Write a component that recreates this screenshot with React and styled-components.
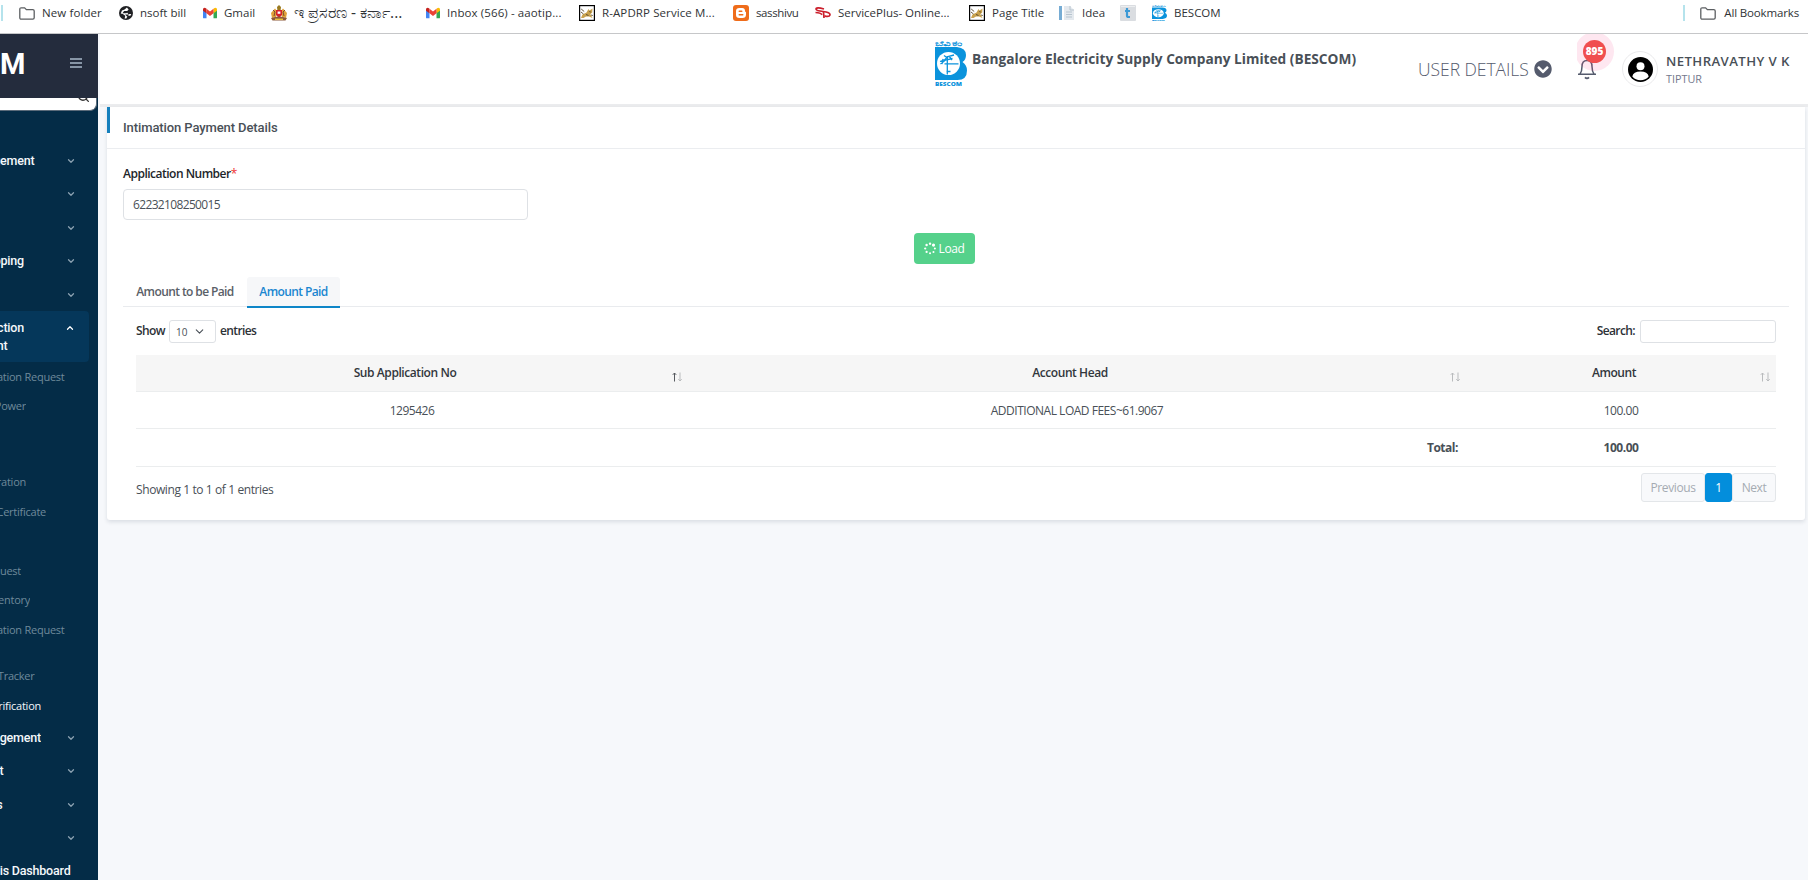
import styled, { createGlobalStyle } from "styled-components";
import { FiChevronDown, FiChevronUp, FiSearch } from "react-icons/fi";
import { FaChevronCircleDown } from "react-icons/fa";

const bookmarks = [
  { icon: "folder", title: "New folder", width: 100, spacing: 0.1 },
  { icon: "globe", title: "nsoft bill", width: 84 },
  { icon: "gmail", title: "Gmail", width: 68 },
  { icon: "emblem", title: "ಇ ಪ್ರಸರಣ - ಕರ್ನಾ...", width: 155, size: 15.5 },
  { icon: "gmail", title: "Inbox (566) - aaotip...", width: 153, spacing: 0.1 },
  { icon: "cat", title: "R-APDRP Service M...", width: 154, spacing: 0.1 },
  { icon: "blogger", title: "sasshivu", width: 82, spacing: -0.4 },
  { icon: "serviceplus", title: "ServicePlus- Online...", width: 154 },
  { icon: "cat", title: "Page Title", width: 90, spacing: 0.05 },
  { icon: "idea", title: "Idea", width: 61 },
  { icon: "t", title: "", width: 32 },
  { icon: "bescom", title: "BESCOM", width: 80 },
];

const menu = [
  { label: "gement", end: 34.5, height: 33, chevron: true },
  { label: "", end: 0, height: 34, chevron: true },
  { label: "", end: 0, height: 33, chevron: true },
  { label: "pping", end: 24, height: 34, chevron: true },
  { label: "", end: 0, height: 33, chevron: true },
  { active: true },
  { label: "ation Request", end: 64.5, height: 29, sub: true },
  { label: "Power", end: 26, height: 30, sub: true },
  { label: "ration", end: 26, height: 30, gap: 46, sub: true },
  { label: "Certificate", end: 46, height: 30, sub: true },
  { label: "uest", end: 21, height: 29, gap: 29, sub: true },
  { label: "entory", end: 30, height: 30, sub: true },
  { label: "ation Request", end: 64.5, height: 29, sub: true },
  { label: "Tracker", end: 34.5, height: 30, gap: 17, sub: true },
  { label: "rification", end: 41, height: 30, sub: true, current: true },
  { label: "agement", end: 41, height: 33, chevron: true },
  { label: "t", end: 3.5, height: 34, chevron: true },
  { label: "s", end: 2.5, height: 33, chevron: true },
  { label: "", end: 0, height: 33, chevron: true },
  { label: "is Dashboard", end: 70.5, height: 34 },
];

const BescomLogo = ({ width, height }) => (
  <svg width={width} height={height} viewBox="0 0 32 46" preserveAspectRatio="none">
    <text x="0" y="5.8" fontSize="7" fontWeight="700" fill="#0b93dc" textLength="27" lengthAdjust="spacingAndGlyphs">
      ಬೆವಿಕಂ
    </text>
    <path d="M0 7h22q9 1 9 8 0 5-3.500 7 4.500 3 4.500 8.500 0 9.500-9.500 9.500H0z" fill="#0b93dc" />
    <circle cx="13.500" cy="23.500" r="11.500" fill="#fff" />
    <path d="M12.300 16v18.500M9.500 23.800h14M11.500 31.500h4" stroke="#0b93dc" strokeWidth="1.300" fill="none" />
    <path
      d="M5 21.500l5-2 3-3 6-1.500M5.500 24l5-4 7-1.500M9 15.500l3.500 2.500M14 16l3 4M8 19l-1 5"
      stroke="#0b93dc"
      strokeWidth="1.300"
      fill="none"
    />
    <text x="0" y="46" fontSize="5.6" fontWeight="800" fill="#0b93dc" textLength="27" lengthAdjust="spacingAndGlyphs">
      BESCOM
    </text>
  </svg>
);

const Folder = () => (
  <svg width="16" height="13" viewBox="0 0 16 13">
    <path
      d="M.8 2.2Q.8.8 2.2.8h3.4l1.8 1.8h6.4q1.4 0 1.4 1.4v6.8q0 1.4-1.4 1.4H2.2Q.8 12.2.8 10.8z"
      fill="none"
      stroke="#5c5f62"
      strokeWidth="1.3"
    />
  </svg>
);

const BookmarkIcon = ({ name }) => {
  if (name === "folder") return <Folder />;
  if (name === "bescom") return <BescomLogo width="15" height="16" />;

  return (
    <svg width={name === "globe" || name === "gmail" ? 14 : 16} height="16" viewBox="0 0 16 16">
      {name === "globe" && (
        <>
          <circle cx="8" cy="8" r="8" fill="#202124" />
          <path d="M9 1.8 11 4 9.400 5.600H7.600l-1.500 2h3.400l1 1.500H14l-1 2-3.200.1-1.400 3-2 .1.800-3.100-2.800-2L2 8.600 3.400 5l3-1z" fill="#fff" />
          <path d="M5.800 5.600h4.600l-2 2.600H4zM7 9.600h4.800l-2.400 2.600z" fill="#202124" />
        </>
      )}
      {name === "gmail" && (
        <>
          <path d="M0 4v9q0 1 1 1h3V6.600z" fill="#4285f4" />
          <path d="M16 4v9q0 1-1 1h-3V6.600z" fill="#34a853" />
          <path d="M0 3.800Q0 2 1.800 2 2.700 2 4 3v5.200L0 5.400z" fill="#c5221f" />
          <path d="M16 3.800Q16 2 14.200 2 13.300 2 12 3v5.200l4-2.800z" fill="#fbbc04" />
          <path d="M4 3l4 3.200L12 3v5.200l-4 3.200-4-3.200z" fill="#ea4335" />
        </>
      )}
      {name === "emblem" && (
        <>
          <path d="M6 2 8 0l2 2-.4 3H6.400z" fill="#9a7a20" />
          <path d="M0 8l4-4.500L6 6l-1 6-4 1zM16 8l-4-4.500L10 6l1 6 4 1z" fill="#e0a23a" />
          <path d="M2 5l2 2-1 4M14 5l-2 2 1 4" stroke="#7a4a30" fill="none" />
          <path d="M5 5h6v5l-3 3-3-3z" fill="#d4232b" />
          <path d="M6.600 6.500h2.800v2.300H6.600z" fill="#fff" />
          <path d="M0 13q8-3 16 0l-1.500 2.500h-13z" fill="#8c5a3c" />
          <path d="M4 13.600h8v1.400H4z" fill="#e8c33c" />
        </>
      )}
      {name === "cat" && (
        <>
          <rect x=".6" y=".6" width="14.8" height="14.8" fill="#fff" stroke="#000" strokeWidth="1.2" />
          <path d="m2 13 1.500-3.500 4-2L9.500 4l1 1.600 3-2.100-.3 4-1.800 1.700L13.500 13l-3.500-1.600-3 .2L4.500 13z" fill="#c9a24e" />
          <path d="m2.200 4 3 2.500M2 7l2.500 2M7 9.500l2.500 1M10.300 6.500l1.500.6M12 10l1.800.5" stroke="#54452a" strokeWidth=".9" />
        </>
      )}
      {name === "blogger" && (
        <>
          <rect width="16" height="16" rx="3" fill="#ef6c1a" />
          <path d="M6.500 3h2.700Q12 3.200 12 5.800q0 1.200 1 1.400v2.600Q12.800 13 9.600 13H6.400Q3 13 3 9.800V6.300Q3 3 6.500 3z" fill="#fff" />
          <path d="M6.200 6.200h2.600M6.200 9.800h3.600" stroke="#ef6c1a" strokeWidth="1.4" strokeLinecap="round" />
        </>
      )}
      {name === "serviceplus" && (
        <g fill="none" stroke="#cb1f2c" strokeWidth="1.7">
          <path d="M9 4Q1 1.500 1 4.200q.3 1.800 7 2.300 7.400.8 7 3.500-.8 2.300-5.600.9" />
          <path d="M.5 7.500q5 .2 6.500 2.200M8.500 7l.5 6" />
        </g>
      )}
      {name === "idea" && (
        <>
          <path d="M0 1h3v14H0z" fill="#76acd4" />
          <path d="M5 1h6l4 4v10H5z" fill="#e4e9ee" />
          <path d="M11 1v4h4M7 7h6M7 9.500h6M7 12h6" stroke="#b7c4cf" fill="none" />
        </>
      )}
      {name === "t" && (
        <>
          <rect width="16" height="16" rx="1" fill="#dadde1" />
          <path d="M1 1h14v1H1z" fill="#eceef0" />
          <path d="M7 3v7.500Q7 12 8.500 12H10M5 6h5" stroke="#3d9ad6" strokeWidth="2.200" fill="none" />
        </>
      )}
    </svg>
  );
};

const SortArrows = ({ asc }) => (
  <Sort>
    <svg width="11" height="10" viewBox="0 0 11 10">
      <path d="M2.500 9.500V1M.8 2.800 2.500 1l1.700 1.800" stroke={asc ? "#55595e" : "#b9bbbd"} fill="none" />
      <path d="M8 .5V9M6.300 7.200 8 9l1.700-1.800" stroke="#b9bbbd" fill="none" />
    </svg>
  </Sort>
);

const Spinner = () => (
  <svg width="13" height="13" viewBox="0 0 13 13" fill="#fff">
    <circle cx="6.500" cy="1.300" r="1.300" />
    <circle cx="10.200" cy="2.800" r="1.700" />
    <circle cx="11.700" cy="6.500" r="1.100" />
    <circle cx="10.200" cy="10.200" r="1.100" />
    <circle cx="6.500" cy="11.700" r="1.100" />
    <circle cx="2.800" cy="10.200" r="1.200" />
    <circle cx="1.300" cy="6.500" r="1.200" />
    <circle cx="2.800" cy="2.800" r="1.300" />
  </svg>
);

const Bookmarks = () => (
  <BookmarkBar>
    <Divider />
    <BookmarkList>
      {bookmarks.map((item, i) => (
        <Bookmark key={i} $width={item.width} $spacing={item.spacing} $size={item.size}>
          <BookmarkIcon name={item.icon} />
          {item.title && <span>{item.title}</span>}
        </Bookmark>
      ))}
    </BookmarkList>
    <Divider />
    <AllBookmarks>
      <Folder />
      <span>All Bookmarks</span>
    </AllBookmarks>
  </BookmarkBar>
);

const Sidebar = () => (
  <Aside>
    <Brand>
      <BrandName>M</BrandName>
      <Burger>
        <i />
        <i />
        <i />
      </Burger>
    </Brand>
    <SearchBox>
      <FiSearch />
    </SearchBox>
    <Menu>
      {menu.map((item, i) =>
        item.active ? (
          <ActiveItem key={i}>
            <MenuLine>
              <Label $end={24}>ction</Label>
              <FiChevronUp />
            </MenuLine>
            <MenuLine>
              <Label $end={7.5}>nt</Label>
            </MenuLine>
          </ActiveItem>
        ) : (
          <MenuItem key={i} $height={item.height} $gap={item.gap}>
            <Label $end={item.end} $sub={item.sub} $current={item.current}>
              {item.label}
            </Label>
            {item.chevron && <FiChevronDown />}
          </MenuItem>
        )
      )}
    </Menu>
  </Aside>
);

const TopBar = () => (
  <Header>
    <Company>
      <BescomLogo width="32" height="46" />
      <CompanyName>Bangalore Electricity Supply Company Limited (BESCOM)</CompanyName>
    </Company>
    <UserDetails>
      <span>USER DETAILS</span>
      <FaChevronCircleDown />
    </UserDetails>
    <Notifications>
      <svg width="20" height="22" viewBox="0 0 20 22" fill="none" stroke="#555b6d" strokeWidth="1.500">
        <path d="M1 16.200h18M3 16q2-2.400 2-7.400Q5 2.500 10 2.500t5 6.100q0 5 2 7.400" strokeLinejoin="round" />
        <path d="M8 19.300q2 2.200 4 0" strokeWidth="1.800" />
      </svg>
      <Halo>
        <Count>895</Count>
      </Halo>
    </Notifications>
    <Avatar>
      <svg width="25" height="25" viewBox="0 0 25 25">
        <circle cx="12.500" cy="12.500" r="12.500" fill="#000" />
        <circle cx="12.500" cy="9.300" r="4" fill="#fff" />
        <path d="M4.300 19.500q1-5 8.200-5t8.200 5q-3.200 3.800-8.200 3.800t-8.200-3.800z" fill="#fff" />
      </svg>
    </Avatar>
    <div>
      <UserName>NETHRAVATHY V K</UserName>
      <Place>TIPTUR</Place>
    </div>
  </Header>
);

const PaymentTable = () => (
  <Table>
    <colgroup>
      <col width="552" />
      <col width="778" />
      <col width="310" />
    </colgroup>
    <thead>
      <tr>
        <Th>
          Sub Application No
          <SortArrows asc />
        </Th>
        <Th>
          Account Head
          <SortArrows />
        </Th>
        <Th>
          Amount
          <SortArrows />
        </Th>
      </tr>
    </thead>
    <tbody>
      <tr>
        <Td>1295426</Td>
        <Td>ADDITIONAL LOAD FEES~61.9067</Td>
        <Td>100.00</Td>
      </tr>
    </tbody>
    <tfoot>
      <tr>
        <Total colSpan={2} $right>
          Total:
        </Total>
        <Total>100.00</Total>
      </tr>
    </tfoot>
  </Table>
);

const App = () => (
  <>
    <GlobalStyle />
    <Bookmarks />
    <Body>
      <Sidebar />
      <Main>
        <TopBar />
        <Card>
          <CardHeader>Intimation Payment Details</CardHeader>
          <CardBody>
            <FieldLabel>
              Application Number<em>*</em>
            </FieldLabel>
            <Input defaultValue="62232108250015" />
            <LoadButton>
              <Spinner />
              Load
            </LoadButton>
            <Tabs>
              <Tab>Amount to be Paid</Tab>
              <Tab $active>Amount Paid</Tab>
            </Tabs>
            <TabPane>
              <Controls>
                <Length>
                  Show
                  <Select>
                    10 <FiChevronDown />
                  </Select>
                  entries
                </Length>
                <Search>
                  Search:
                  <SearchInput />
                </Search>
              </Controls>
              <PaymentTable />
              <Footer>
                <Info>Showing 1 to 1 of 1 entries</Info>
                <Pagination>
                  <Page $width={64}>Previous</Page>
                  <Page $width={27} $active>
                    1
                  </Page>
                  <Page $width={44}>Next</Page>
                </Pagination>
              </Footer>
            </TabPane>
          </CardBody>
        </Card>
      </Main>
    </Body>
  </>
);

const GlobalStyle = createGlobalStyle`
  * {
    box-sizing: border-box;
  }

  body {
    margin: 0;
    height: 880px;
    overflow: hidden;
    background: #f6f8fb;
    font-family: "Open Sans", "Noto Sans", sans-serif;
    font-size: 12px;
    color: #495057;
  }
`;

const BookmarkBar = styled.nav`
  display: flex;
  height: 34px;
  padding: 5px 9px 0 1px;
  background: #fff;
  border-bottom: 1px solid #c6c7c9;
  color: #303336;
`;

const Divider = styled.div`
  width: 2px;
  height: 16px;
  background: #b5e3ec;
`;

const BookmarkList = styled.div`
  display: flex;
  flex: 1;
  padding-left: 16px;
`;

const Bookmark = styled.a`
  display: flex;
  flex: none;
  align-items: center;
  gap: 7px;
  width: ${(p) => p.$width}px;
  height: 16px;
  font-size: ${(p) => p.$size || 11.5}px;
  white-space: nowrap;
  letter-spacing: ${(p) => p.$spacing || 0}px;

  svg {
    flex: none;
  }

  span {
    margin-top: -2px;
  }
`;

const AllBookmarks = styled(Bookmark)`
  gap: 8px;
  width: auto;
  margin-left: 15px;
  letter-spacing: -0.15px;
`;

const Body = styled.div`
  display: flex;
  height: 846px;
`;

const Aside = styled.aside`
  width: 98px;
  flex: none;
  overflow: hidden;
  background: #042c47;
`;

const Brand = styled.div`
  display: flex;
  align-items: center;
  height: 64px;
  background: #242c3d;
`;

const BrandName = styled.div`
  width: 70px;
  margin-top: -4px;
  font: 700 29px Roboto, sans-serif;
  color: #fff;
`;

const Burger = styled.div`
  display: grid;
  gap: 2px;
  width: 12px;
  margin-top: -7px;

  i {
    height: 2px;
    background: #8795a6;
  }
`;

const SearchBox = styled.div`
  display: flex;
  justify-content: flex-end;
  width: 97px;
  height: 13px;
  padding-right: 6px;
  overflow: hidden;
  background: #fff;
  border: solid #5b6b7a;
  border-width: 0 1px 1px 0;
  border-radius: 0 0 7px 0;

  svg {
    flex: none;
    width: 13px;
    height: 13px;
    margin-top: -8px;
    color: #333;
    stroke-width: 2.5;
    transform: scaleX(1);
  }
`;

const Menu = styled.div`
  padding-top: 33px;
`;

const MenuItem = styled.div`
  display: flex;
  align-items: center;
  height: ${(p) => p.$height}px;
  margin-top: ${(p) => p.$gap || 0}px;

  svg {
    width: 10px;
    height: 10px;
    margin-left: auto;
    margin-right: 22px;
    color: #8ba1b1;
    stroke-width: 3;
  }
`;

const Label = styled.span`
  display: flex;
  flex: none;
  justify-content: flex-end;
  width: ${(p) => p.$end}px;
  overflow: hidden;
  white-space: nowrap;
  font-family: ${(p) => (p.$sub ? `"Open Sans"` : "Roboto")}, sans-serif;
  font-size: ${(p) => (p.$sub ? 11 : 12.5)}px;
  font-weight: ${(p) => (p.$sub ? 400 : 500)};
  line-height: 18px;
  letter-spacing: ${(p) => (p.$sub ? -0.25 : -0.2)}px;
  color: ${(p) => (p.$sub && !p.$current ? "#6f8a9b" : "#f4f8fb")};
`;

const ActiveItem = styled.div`
  width: 89px;
  height: 51px;
  padding-top: 8px;
  background: #05375a;
  border-radius: 0 4px 4px 0;
`;

const MenuLine = styled(MenuItem)`
  height: 18px;

  svg {
    margin-right: 14px;
    color: #fff;
  }
`;

const Main = styled.main`
  flex: 1;
  min-width: 0;
  padding-left: 2px;
`;

const Header = styled.header`
  display: flex;
  height: 73px;
  background: #fff;
  border-bottom: 3px solid #ebecee;
`;

const Company = styled.div`
  display: flex;
  gap: 5px;
  width: 483px;
  margin-left: 835px;
  padding-top: 6px;
`;

const CompanyName = styled.h1`
  margin: 9px 0 0;
  font-size: 13.7px;
  line-height: 20px;
  white-space: nowrap;
`;

const UserDetails = styled.div`
  display: flex;
  align-items: center;
  gap: 5px;
  width: 159px;
  height: 70px;
  font-size: 17.5px;
  font-weight: 300;
  letter-spacing: -0.05px;
  white-space: nowrap;
  color: #555b6d;

  svg {
    width: 18px;
    height: 18px;
    margin-top: -1px;
  }
`;

const Notifications = styled.div`
  position: relative;
  width: 45px;
  height: 70px;
  padding-top: 24px;
  overflow: hidden;
`;

const Halo = styled.div`
  position: absolute;
  top: -2px;
  left: -2px;
  display: grid;
  place-items: center;
  width: 39px;
  height: 39px;
  border-radius: 50%;
  background: rgba(244, 60, 130, 0.12);
`;

const Count = styled.span`
  width: 23px;
  height: 23px;
  border-radius: 50%;
  background: #f04f4f;
  font: 800 10px/23px "Open Sans", sans-serif;
  text-align: center;
  color: #fff;
`;

const Avatar = styled.div`
  display: grid;
  place-items: center;
  width: 36px;
  height: 36px;
  margin: 17px 8px 0 0;
  border: 1px solid #eaeaec;
  border-radius: 50%;
`;

const UserName = styled.div`
  margin-top: 18px;
  font-size: 13.2px;
  font-weight: 600;
  line-height: 18px;
  letter-spacing: 0.4px;
  white-space: nowrap;
`;

const Place = styled.div`
  font-size: 10.8px;
  font-weight: 500;
  line-height: 18px;
  color: #74788d;
`;

const Card = styled.section`
  width: 1698px;
  height: 413px;
  margin-left: 7px;
  background: #fff;
  border-radius: 0 0 3px 3px;
  box-shadow: 0 2px 4px rgba(15, 34, 58, 0.12);
  letter-spacing: -0.4px;
`;

const CardHeader = styled.h4`
  height: 41px;
  margin: 0;
  padding-left: 13px;
  border-left: 3px solid;
  border-image: linear-gradient(#1580bd 26px, transparent 26px) 0 0 0 3;
  font: 500 13px/41px Roboto, sans-serif;
  letter-spacing: -0.1px;
  box-shadow: 0 1px #ebedf0;
`;

const CardBody = styled.div`
  display: flex;
  flex-direction: column;
  padding: 17px 16px 0;
`;

const FieldLabel = styled.label`
  margin-bottom: 7px;
  font-weight: 600;
  line-height: 17px;
  letter-spacing: -0.5px;
  color: #212529;

  em {
    font-style: normal;
    font-weight: 400;
    color: #e33;
  }
`;

const Input = styled.input`
  width: 405px;
  height: 31px;
  padding: 0 9px;
  border: 1px solid #dee1e5;
  border-radius: 4px;
  font: inherit;
  letter-spacing: -0.65px;
  color: inherit;
`;

const LoadButton = styled.button`
  display: flex;
  align-items: center;
  gap: 3px;
  align-self: center;
  width: 61px;
  height: 31px;
  margin: 13px 24px 13px 0;
  padding: 0 10px;
  border: 0;
  border-radius: 4px;
  background: #55d18b;
  font: inherit;
  letter-spacing: -0.4px;
  color: #fff;
`;

const Tabs = styled.div`
  display: flex;
  height: 30px;
  border-bottom: 1px solid #e9ebee;
`;

const Tab = styled.button`
  width: ${(p) => (p.$active ? 93 : 124)}px;
  height: 31px;
  padding: 0;
  border: 0;
  border-bottom: 2px solid ${(p) => (p.$active ? "#0e86c8" : "transparent")};
  border-radius: 3px 3px 0 0;
  background: ${(p) => (p.$active ? "#f6f7f9" : "transparent")};
  font: 600 12px "Open Sans", sans-serif;
  letter-spacing: -0.6px;
  color: ${(p) => (p.$active ? "#1a86d0" : "#5a6067")};
`;

const TabPane = styled.div`
  padding: 13px 13px 0;
`;

const Controls = styled.div`
  display: flex;
  justify-content: space-between;
  height: 35px;
  font-weight: 600;
  letter-spacing: -0.6px;
  color: #2c3136;
`;

const Length = styled.label`
  display: flex;
  gap: 4px;
  height: 22px;
  line-height: 22px;
`;

const Select = styled.div`
  display: flex;
  align-items: center;
  justify-content: space-between;
  width: 47px;
  height: 23px;
  padding: 0 9px 0 6px;
  border: 1px solid #dee1e5;
  border-radius: 3px;
  font-size: 10px;
  font-weight: 400;
  letter-spacing: 0;
  color: #495057;

  svg {
    width: 13px;
    height: 13px;
  }
`;

const Search = styled(Length)`
  gap: 5px;
`;

const SearchInput = styled.input`
  width: 136px;
  height: 23px;
  border: 1px solid #dee1e5;
  border-radius: 3px;
`;

const Table = styled.table`
  width: 1640px;
  table-layout: fixed;
  border-collapse: separate;
  border-spacing: 0;
`;

const Th = styled.th`
  position: relative;
  height: 37px;
  padding: 0 22px 2px 8px;
  background: #f6f6f6;
  border-bottom: 1px solid #ebedee;
  font-weight: 600;
  letter-spacing: -0.42px;
  color: #32373c;
`;

const Sort = styled.span`
  position: absolute;
  right: 5px;
  bottom: 9px;
  line-height: 0;
`;

const Td = styled.td`
  height: 37px;
  padding: 0 8px;
  border-bottom: 1px solid #ebedee;
  text-align: center;
  letter-spacing: -0.48px;
`;

const Total = styled(Td)`
  height: 38px;
  font-weight: 700;
  text-align: ${(p) => (p.$right ? "right" : "center")};
`;

const Footer = styled.div`
  display: flex;
  justify-content: space-between;
  padding-top: 6px;
`;

const Info = styled.div`
  padding-top: 9px;
  line-height: 16px;
`;

const Pagination = styled.div`
  display: flex;
`;

const Page = styled.button`
  width: ${(p) => p.$width}px;
  height: 29px;
  padding: 0;
  border: 1px solid ${(p) => (p.$active ? "#038edc" : "#e3e6e9")};
  border-radius: 3px;
  background: ${(p) => (p.$active ? "#038edc" : "#f8f9fb")};
  font: inherit;
  letter-spacing: -0.4px;
  color: ${(p) => (p.$active ? "#fff" : "#a5abb2")};
`;

export default App;
